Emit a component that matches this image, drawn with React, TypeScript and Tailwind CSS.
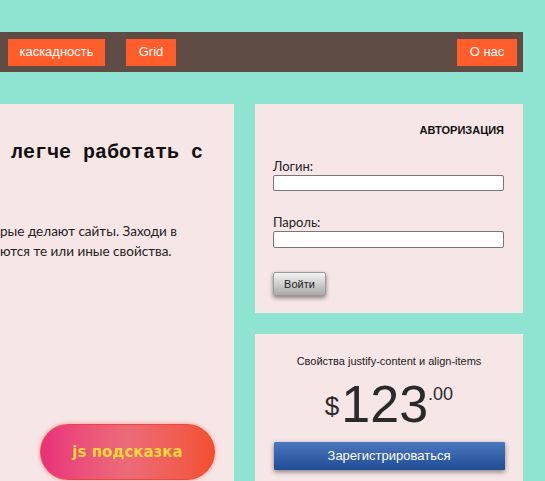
export default function App() {
  return (
    <div className="h-[481px] w-[545px] overflow-hidden bg-[#8ee4d0] pt-8 font-['Liberation_Sans',Arial,sans-serif]">
      {/* Nav */}
      <nav className="flex h-10 w-[523px] items-center bg-[#5e4c45] px-2">
        <a className="flex h-[27px] w-[97px] items-center justify-center bg-[#ff5e2c] text-[13px] text-white">каскадность</a>
        <a className="ml-[21px] flex h-[27px] w-[50px] items-center justify-center bg-[#ff5e2c] text-[13px] text-white">Grid</a>
        <a className="ml-auto mr-[-2px] flex h-[27px] w-[60px] items-center justify-center bg-[#ff5e2c] text-[13px] text-white">О нас</a>
      </nav>

      <div className="mt-8 flex gap-[21px]">
        {/* Left panel */}
        <section className="flex h-[400px] w-[234px] flex-col bg-[#f7e6e6]">
          <h1 className="mt-[35px] whitespace-nowrap pl-[11px] font-['Liberation_Mono',monospace] text-[20px] font-bold leading-[28px] text-[#111]">
            легче работать с
          </h1>
          <p className="mt-[54px] whitespace-nowrap font-['Lato',sans-serif] text-[13.5px] leading-[20px] text-[#222]">
            рые делают сайты. Заходи в
            <br />
            ются те или иные свойства.
          </p>
          <button className="ml-[40px] mt-[163px] h-[56px] w-[175px] rounded-full border border-[#f0453a] bg-gradient-to-r from-[#e92f7b] via-[#ec6b78] to-[#f3502b] font-['DejaVu_Sans',sans-serif] text-[15px] font-bold text-[#f8d63c] shadow-[0_0_4px_rgba(240,60,60,0.5)]">
            js подсказка
          </button>
        </section>

        {/* Right column */}
        <div className="flex w-[268px] flex-col gap-[21px]">
          <section className="h-[209px] bg-[#f7e6e6] px-[18px] pt-[19px]">
            <h2 className="pr-[1px] text-right text-[11px] font-bold leading-[14px] text-[#111]">АВТОРИЗАЦИЯ</h2>
            <label className="mt-[22px] block font-['Lato',sans-serif] text-[13px] leading-[15px] text-[#222]">Логин:</label>
            <input className="mt-[1px] block h-[16px] w-[231px] rounded-[2px] border border-[#777] bg-white" />
            <label className="mt-[24px] block font-['Lato',sans-serif] text-[13px] leading-[15px] text-[#222]">Пароль:</label>
            <input className="mt-[1px] block h-[17px] w-[231px] rounded-[2px] border border-[#777] bg-white" />
            <button className="mt-[24px] h-[24px] w-[53px] rounded-[2px] border border-[#9a9a9a] bg-gradient-to-b from-[#f4f4f4] to-[#a9a9a9] text-[11px] text-[#222] shadow-[0_2px_4px_rgba(0,0,0,0.45)]">
              Войти
            </button>
          </section>

          <section className="flex h-[200px] flex-col items-center bg-[#f7e6e6] px-[18px] pt-[20px]">
            <p className="text-[11px] leading-[14px] text-[#222]">Свойства justify-content и align-items</p>
            <div className="mt-[6px] flex items-start text-[#2a2a2a]">
              <span className="mr-[2px] mt-[17px] text-[26px] leading-[30px]">$</span>
              <span className="text-[52px] leading-[60px]">123</span>
              <span className="mt-[10px] text-[18px] leading-[20px]">.00</span>
            </div>
            <button className="mt-[8px] h-[28px] w-[231px] rounded-[1px] bg-gradient-to-b from-[#4c78c0] to-[#1f4c93] text-[13px] text-white shadow-[0_2px_5px_rgba(0,0,0,0.45)]">
              Зарегистрироваться
            </button>
          </section>
        </div>
      </div>
    </div>
  )
}
